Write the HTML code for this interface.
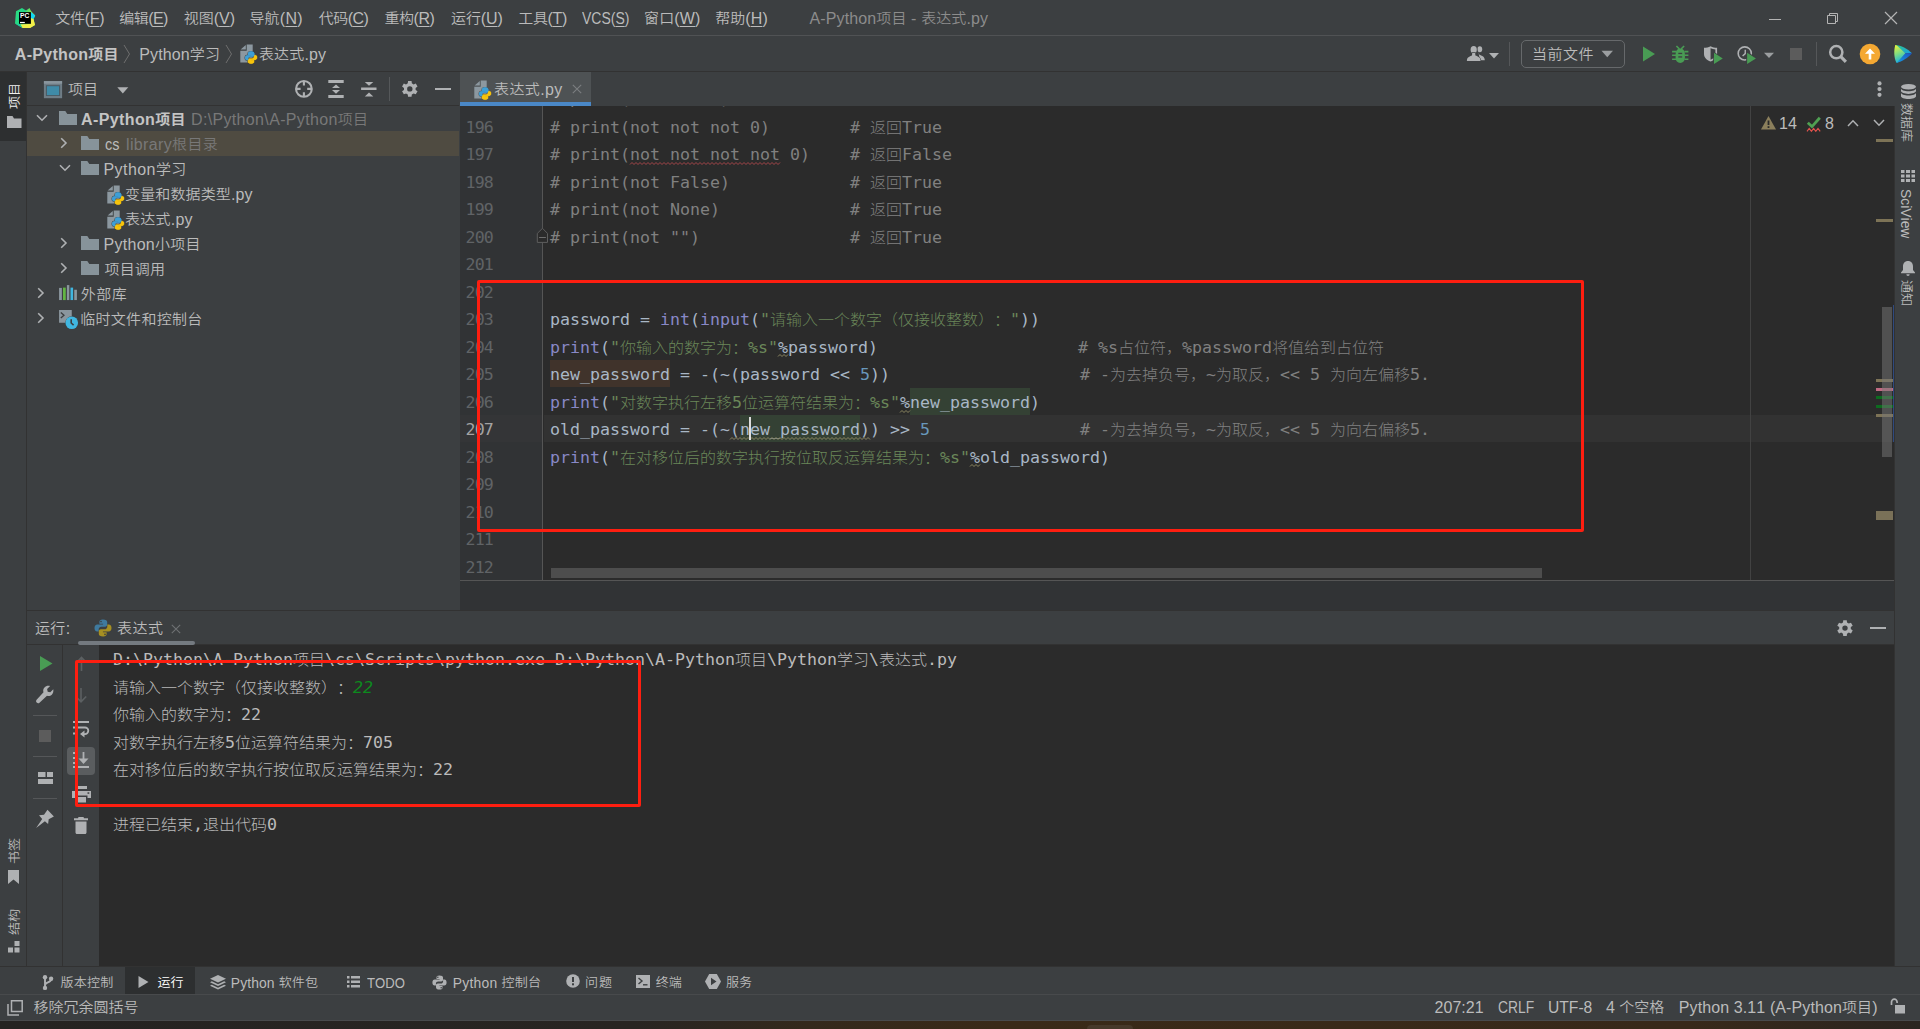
<!DOCTYPE html>
<html lang="zh-CN">
<head>
<meta charset="utf-8">
<title>A-Python项目 - 表达式.py</title>
<style>
*{box-sizing:border-box;margin:0;padding:0}
html,body{width:1920px;height:1029px;overflow:hidden;background:#3c3f41}
body{position:relative;font-family:"Liberation Sans","Noto Sans CJK SC",sans-serif;font-size:15px;color:#bbbbbb;-webkit-font-smoothing:antialiased;text-spacing-trim:space-all;font-kerning:none}
.abs{position:absolute}
.t{position:absolute;white-space:pre;line-height:20px;height:20px;font-size:16px;letter-spacing:var(--ls,0px);transform-origin:0 50%;transform:scaleX(var(--sx,1))}
.t.bd i{font-weight:700}
.t i,.vt i{font-weight:350;font-style:normal;display:inline-block;font-size:.9375em;line-height:0;transform:translateY(-.8px) scaleY(.93);letter-spacing:var(--ls,0px)}
.hl{position:absolute;height:1px;left:0;right:0}
svg{position:absolute;overflow:visible}
/* menu */
#menubar{left:0;top:0;width:1920px;height:36px;background:#3c3f41;border-bottom:1px solid #505254}
#menubar .t{top:8.600px;color:#bbbbbb}
#menubar u{text-decoration-thickness:1px;text-underline-offset:2px}
#navbar{left:0;top:36px;width:1920px;height:36px;background:#3c3f41;border-bottom:1px solid #323232}
#navbar .t{top:8.8px}
/* stripes */
#lstripe{left:0;top:72px;width:27px;height:894px;background:#3c3f41;border-right:1px solid #323232}
#rstripe{left:1894px;top:72px;width:26px;height:894px;background:#3c3f41;border-left:1px solid #323232}
.vt{position:absolute;white-space:pre;font-size:13.9px;line-height:16px;transform-origin:0 0}
/* project */
#proj{left:27px;top:72px;width:432px;height:538px;background:#3c3f41}
#projhead{left:0;top:0;width:432px;height:34px}
#tree .row{position:absolute;left:0;width:432px;height:25px}
#tree .t{top:3.5px}
.dim{color:#787878}
/* editor */
#edwrap{left:459px;top:72px;width:1435px;height:509px;background:#2b2b2b;border-left:1px solid #3c3f41}
#tabs{left:0;top:0;width:1435px;height:34px;background:#3c3f41}
#tab1{left:0;top:0;width:131px;height:34px;background:#4e5254;border-bottom:4px solid #4a88c7}
#gutter{left:0;top:34px;width:83px;height:475px;background:#313335;border-right:1px solid #555555}
.ln{position:absolute;left:5.6px;font-family:"DejaVu Sans Mono","Liberation Mono",monospace;font-size:16.61px;letter-spacing:-.9px;color:#606366;line-height:27.5px;height:27.5px;white-space:pre}
#code{left:84px;top:34px;width:1350px;height:475px;overflow:hidden}
.cl{position:absolute;left:6px;font-family:"DejaVu Sans Mono","Liberation Mono","Noto Sans CJK SC",monospace;font-size:16.61px;color:#a9b7c6;line-height:27.5px;height:27.5px;white-space:pre}
.cl i{font-weight:300;line-height:0;display:inline-block;transform:scaleY(.93);font-style:normal;font-size:16px;font-family:"Noto Sans CJK SC",sans-serif}
.c{color:#808080}.s{color:#6a8759}.b{color:#8888c6}.n{color:#6897bb}
/* run */
#run{left:27px;top:610px;width:1867px;height:356px;background:#3c3f41;border-top:1px solid #323232}
#console{left:72px;top:34px;width:1795px;height:321px;background:#2b2b2b;overflow:hidden}
.ol{position:absolute;left:14px;font-family:"DejaVu Sans Mono","Liberation Mono","Noto Sans CJK SC",monospace;font-size:16.61px;color:#bbbbbb;line-height:27.5px;height:27.5px;white-space:pre}
.ol i{font-weight:300;line-height:0;display:inline-block;transform:scaleY(.93);font-style:normal;font-size:16px;font-family:"Noto Sans CJK SC",sans-serif}
/* bottom */
#btools{left:0;top:966px;width:1920px;height:28px;background:#3c3f41;border-top:1px solid #323232}
#btools .t{top:6.100px;font-size:13.9px}
#status{left:0;top:994px;width:1920px;height:27px;background:#3c3f41;border-top:1px solid #484a4c;border-bottom:1px solid #484a4c}
#status .t{top:3.400px}
#desk{left:0;top:1021px;width:1920px;height:8px;background:linear-gradient(90deg,#252321 0%,#282522 33%,#34291c 42%,#3a2a18 52%,#38291a 88%,#2b2520 100%)}
.red{position:absolute;border:3px solid #fe1e10;border-radius:2px}
</style>
</head>
<body>
<div id="menubar" class="abs">
<svg style="left:14px;top:7px" width="22" height="22" viewBox="0 0 22 22"><defs><linearGradient id="lg1" x1="0" y1="0" x2="1" y2=".3"><stop offset="0" stop-color="#2fdc7e"/><stop offset=".45" stop-color="#21d789"/><stop offset=".8" stop-color="#8be84f"/></linearGradient></defs><path d="M2 4.200L8 1L12 3.500L15.500.9L17 4L21.200 8.500L19.500 12L21 18L16 21L8.500 21L1 16.500Z" fill="url(#lg1)"/><path d="M17 9L19.500 12L21 18L16 21L8.500 21L6.500 17.500L17 17Z" fill="#f3ee48"/><path d="M8.500 21L6 17L4 17.500L1 16.500L8.500 21Z" fill="#1fc9a0"/><path d="M16.800 5L21.200 8.500L19.500 12L16.800 11Z" fill="#10d5f4"/><rect x="5" y="5.100" width="11.900" height="11.700" fill="#000"/><text x="6" y="11.200" font-family="Liberation Sans,sans-serif" font-weight="bold" font-size="7.600" textLength="9.300" lengthAdjust="spacingAndGlyphs" fill="#fff">PC</text><rect x="6" y="14.900" width="4.800" height="1.200" fill="#fff"/></svg>
<span id="t1" class="t" style="left:55.20px;--ls:-0.262px"><i>文件</i>(<u>F</u>)</span>
<span id="t2" class="t" style="left:119.20px;--ls:-0.525px"><i>编辑</i>(<u>E</u>)</span>
<span id="t3" class="t" style="left:183.75px"><i>视图</i>(<u>V</u>)</span>
<span id="t4" class="t" style="left:249.40px;--ls:0.225px"><i>导航</i>(<u>N</u>)</span>
<span id="t5" class="t" style="left:318.80px;--ls:-0.525px"><i>代码</i>(<u>C</u>)</span>
<span id="t6" class="t" style="left:384.40px;--ls:-0.450px"><i>重构</i>(<u>R</u>)</span>
<span id="t7" class="t" style="left:451.00px;--ls:-0.100px"><i>运行</i>(<u>U</u>)</span>
<span id="t8" class="t" style="left:518.25px;--ls:-0.363px"><i>工具</i>(<u>T</u>)</span>
<span id="t9" class="t" style="left:581.50px;--sx:0.8741">VCS(<u>S</u>)</span>
<span id="t10" class="t" style="left:644.00px;--ls:0.150px"><i>窗口</i>(<u>W</u>)</span>
<span id="t11" class="t" style="left:715.20px;--ls:0.075px"><i>帮助</i>(<u>H</u>)</span>
<span id="t12" class="t" style="left:809.50px;color:#8c8c8c;--ls:0.121px">A-Python<i>项目</i> - <i>表达式</i>.py</span>
<svg style="left:1768px;top:12px" width="14" height="14" viewBox="0 0 14 14"><path d="M1 7.5H13" stroke="#b4b4b4" stroke-width="1" fill="none"/></svg>
<svg style="left:1826px;top:12px" width="14" height="14" viewBox="0 0 14 14"><path d="M1.5 3.5H9.5V11.5H1.5Z M3.5 3.5V1.5H11.5V9.5H9.5" stroke="#b4b4b4" stroke-width="1" fill="none"/></svg>
<svg style="left:1884px;top:11px" width="14" height="14" viewBox="0 0 14 14"><path d="M1 1L13 13M13 1L1 13" stroke="#b4b4b4" stroke-width="1.2" fill="none"/></svg>
</div>
<div id="navbar" class="abs">
<span id="t13" class="t bd" style="left:14.80px;font-weight:bold;color:#c4c4c4;--ls:0.300px">A-Python<i>项目</i></span>
<svg style="left:122px;top:8px" width="10" height="20" viewBox="0 0 10 20"><path d="M2 1L7.5 10L2 19" stroke="#6e6e6e" stroke-width="1" fill="none"/></svg>
<span id="t14" class="t" style="left:139.20px;--ls:0.143px">Python<i>学习</i></span>
<svg style="left:224px;top:8px" width="10" height="20" viewBox="0 0 10 20"><path d="M2 1L7.5 10L2 19" stroke="#6e6e6e" stroke-width="1" fill="none"/></svg>
<svg style="left:239.5px;top:7.5px" width="18" height="20" viewBox="0 0 18 20"><path d="M.3 6.800V18.500H12.700V.5H6.700V6.800Z" fill="#8c98a0"/><path d="M5.800.9V5.600H.6Z" fill="#8c98a0"/><g transform="translate(5.200,7.600) scale(.98,1)"><path d="M5.900 0C3.400 0 3 1.100 3 2V3.400H6.100V3.900H1.900C.6 3.900 0 4.900 0 6.100C0 7.500.7 8.400 1.900 8.400H3V6.800C3 5.700 3.900 4.900 5 4.900H7.700C8.600 4.900 9.200 4.200 9.200 3.400V2C9.200.7 8 0 5.900 0Z" fill="#3e9fd6" stroke="#3c3f41" stroke-width="1.400" paint-order="stroke"/><path d="M5.900 0C3.400 0 3 1.100 3 2V3.400H6.100V3.900H1.900C.6 3.900 0 4.900 0 6.100C0 7.500.7 8.400 1.900 8.400H3V6.800C3 5.700 3.900 4.900 5 4.900H7.700C8.600 4.900 9.200 4.200 9.200 3.400V2C9.200.7 8 0 5.900 0Z" transform="rotate(180 6 6)" fill="#f7c40c" stroke="#3c3f41" stroke-width="1.400" paint-order="stroke"/><path d="M5.900 0C3.400 0 3 1.100 3 2V3.400H6.100V3.900H1.900C.6 3.900 0 4.900 0 6.100C0 7.500.7 8.400 1.900 8.400H3V6.800C3 5.700 3.900 4.900 5 4.900H7.700C8.600 4.900 9.200 4.200 9.200 3.400V2C9.200.7 8 0 5.900 0Z" transform="rotate(180 6 6)" fill="#f7c40c" stroke="#f7c40c" stroke-width=".5"/><path d="M5.900 0C3.400 0 3 1.100 3 2V3.400H6.100V3.900H1.900C.6 3.900 0 4.900 0 6.100C0 7.500.7 8.400 1.900 8.400H3V6.800C3 5.700 3.900 4.900 5 4.900H7.700C8.600 4.900 9.200 4.200 9.200 3.400V2C9.200.7 8 0 5.900 0Z" fill="#3e9fd6" stroke="#3e9fd6" stroke-width=".5"/></g></svg>
<span id="t15" class="t" style="left:259.00px;--ls:0.120px"><i>表达式</i>.py</span>
<svg style="left:1466px;top:9px" width="34" height="18" viewBox="0 0 34 18"><g fill="#afb1b3"><ellipse cx="13.800" cy="4.300" rx="2.400" ry="3"/><path d="M12.300 6.500L12.600 9.300C14 10.300 18.800 10.800 18.800 15.200H14Z"/></g><g fill="#afb1b3" stroke="#3c3f41" stroke-width="1.300" paint-order="stroke"><ellipse cx="7.700" cy="4.800" rx="3.100" ry="3.700"/><path d="M.9 16C.9 12.300 3.500 11.500 6 10.600L6.200 8H9.200L9.400 10.600C12 11.500 14.600 12.300 14.600 16Z"/></g><path d="M23 8h10l-5 5.500z" fill="#afb1b3"/></svg>
<div class="abs" style="left:1509px;top:6px;width:1px;height:24px;background:#555759"></div>
<div class="abs" style="left:1521px;top:4px;width:104px;height:28px;border:1px solid #66696b;border-radius:5px"></div>
<span id="t16" class="t" style="left:1532.00px;top:8.8px;--ls:0.500px"><i>当前文件</i></span>
<svg style="left:1601px;top:14px" width="13" height="8" viewBox="0 0 13 8"><path d="M.5.800h11.500L6.250 7.200z" fill="#9b9ea0"/></svg>
<svg style="left:1641px;top:9px" width="16" height="18" viewBox="0 0 16 18"><path d="M2 1.500L14 9L2 16.500z" fill="#499c54"/></svg>
<svg style="left:1671px;top:8px" width="19" height="20" viewBox="0 0 19 20"><g fill="#499c54"><path d="M4.800 2.500L6 1.400L9 4.400L7.800 5.500ZM13.700 2.500L12.500 1.400L9.500 4.400L10.700 5.500Z"/><path d="M4.600 10C4.600 6.500 6.500 4.600 9.250 4.600S13.900 6.500 13.900 10V14C13.900 17 12 18.900 9.250 18.900S4.600 17 4.600 14Z"/><path d="M1.100 6.800H5V8.400H1.100ZM17.400 6.800H13.500V8.400H17.400ZM1.100 10.500H5V12.100H1.100ZM17.400 10.500H13.500V12.100H17.400ZM1.100 14.500H5V16.100H1.100ZM17.400 14.500H13.500V16.100H17.400Z"/></g><rect x="7.300" y="8.800" width="3.900" height="1.300" fill="#3c3f41"/><rect x="7.300" y="12.300" width="3.900" height="1.300" fill="#3c3f41"/></svg>
<svg style="left:1703px;top:9px" width="22" height="20" viewBox="0 0 22 20"><path d="M7.560 1.200C9.500 2.400 12 2.800 14.100 2.800V9C14.100 12.500 11.500 15.200 7.560 16.600C3.600 15.200 1 12.500 1 9V2.800C3.100 2.800 5.600 2.400 7.560 1.200Z" fill="#afb1b3"/><path d="M7.560 3.300C9 4 10.800 4.400 12.400 4.500V9C12.400 11.400 10.500 13.500 7.560 14.700Z" fill="#3c3f41"/><path d="M11 7.800L19.750 13.400L11 19.060Z" fill="#499c54" stroke="#3c3f41" stroke-width="1.600" paint-order="stroke"/></svg>
<svg style="left:1736px;top:9px" width="40" height="20" viewBox="0 0 40 20"><circle cx="8.750" cy="8.440" r="6.550" stroke="#afb1b3" stroke-width="1.600" fill="none"/><path d="M9.250 4.800V8.600L6.600 11" stroke="#afb1b3" stroke-width="1.400" fill="none"/><path d="M11.100 7.800L19.900 13.400L11.100 19.060Z" fill="#499c54" stroke="#3c3f41" stroke-width="1.800" paint-order="stroke"/><path d="M28 7.800H38L33 13.100Z" fill="#9b9ea0"/></svg>
<div class="abs" style="left:1789.800px;top:11.800px;width:12.300px;height:12.200px;background:#5c5c5c"></div>
<div class="abs" style="left:1816px;top:6px;width:1px;height:24px;background:#555759"></div>
<svg style="left:1828px;top:8px" width="20" height="20" viewBox="0 0 20 20"><circle cx="8.300" cy="8.200" r="6.100" stroke="#afb1b3" stroke-width="2.500" fill="none"/><path d="M12.800 12.700L17.900 17.800" stroke="#afb1b3" stroke-width="3.200"/></svg>
<svg style="left:1859px;top:7px" width="22" height="22" viewBox="0 0 22 22"><circle cx="11" cy="11" r="10.300" fill="#f4a832"/><path d="M11 5.500L16 10.800H12.300V16.500H9.700V10.800H6z" fill="#fff"/></svg>
<svg style="left:1893px;top:8px" width="20" height="20" viewBox="0 0 20 20"><defs><linearGradient id="lg2" x1=".2" y1="0" x2=".5" y2="1"><stop offset="0" stop-color="#e9f43a"/><stop offset=".5" stop-color="#7bdb86"/><stop offset="1" stop-color="#10aeea"/></linearGradient><linearGradient id="lg3" x1="0" y1="0" x2="1" y2="1"><stop offset="0" stop-color="#2fc98c"/><stop offset="1" stop-color="#1a9ce2"/></linearGradient><linearGradient id="lg4" x1="1" y1="0" x2="0" y2="1"><stop offset="0" stop-color="#1b50c6"/><stop offset="1" stop-color="#169fe0"/></linearGradient></defs><path d="M2.300 .9C8 1.200 14.500 4.500 19 9.300L12 9.200Z" fill="url(#lg3)"/><path d="M19 9.300C15 14 9 17.500 3.600 18.900L12 9.200Z" fill="url(#lg4)"/><path d="M2.300 .9C3 .8 4 1.500 4.500 2L12.300 9.200L4.500 18.300C4 18.800 3.800 19 3.600 18.900C.8 13.500.8 6 2.300 .9Z" fill="url(#lg2)"/></svg>
</div>
<div id="lstripe" class="abs">
<div class="abs" style="left:0;top:0;width:26px;height:69px;background:#2d2f30"></div>
<span class="vt" style="left:7px;top:36.700px;transform:rotate(-90deg);color:#f0f0f0"><i>项目</i></span>
<svg style="left:7px;top:44px" width="15" height="12" viewBox="0 0 15 12"><path d="M0 0H5.500L7 2.500H14.500V12H0z" fill="#afb1b3"/></svg>
<span class="vt" style="left:7px;top:792px;transform:rotate(-90deg)"><i>书签</i></span>
<svg style="left:8px;top:798px" width="11" height="14" viewBox="0 0 11 14"><path d="M0 0H11V14L5.500 9.500L0 14z" fill="#afb1b3"/></svg>
<span class="vt" style="left:7px;top:862.500px;transform:rotate(-90deg)"><i>结构</i></span>
<svg style="left:8px;top:869px" width="12" height="12" viewBox="0 0 12 12"><rect x="6.500" y="0" width="5" height="5" fill="#afb1b3"/><rect x="0" y="6.500" width="5" height="5" fill="#afb1b3"/><rect x="6.500" y="6.500" width="5" height="5" fill="#afb1b3"/></svg>
</div>
<div id="rstripe" class="abs">
<svg style="left:6px;top:12px" width="15" height="15" viewBox="0 0 15 15"><ellipse cx="7.500" cy="2.800" rx="7.500" ry="2.800" fill="#afb1b3"/><path d="M0 4.500c0 1.500 3.400 2.800 7.500 2.800s7.500-1.300 7.500-2.800v2.600c0 1.500-3.400 2.800-7.500 2.800S0 8.600 0 7.100z" fill="#afb1b3"/><path d="M0 8.800c0 1.500 3.400 2.800 7.500 2.800s7.500-1.300 7.500-2.800v3.400c0 1.500-3.400 2.800-7.500 2.800S0 13.700 0 12.200z" fill="#afb1b3"/></svg>
<span class="vt" style="left:19px;top:31px;transform:rotate(90deg)"><i>数据库</i></span>
<svg style="left:6px;top:98px" width="14" height="12" viewBox="0 0 14 12"><path d="M0 0H3.500V3H0zM5 0H9V3H5zM10.500 0H14V3H10.500zM0 4.500H3.500V7.500H0zM5 4.500H9V7.500H5zM10.500 4.500H14V7.500H10.500zM0 9H3.500V12H0zM5 9H9V12H5zM10.500 9H14V12H10.500z" fill="#afb1b3"/></svg>
<span class="vt" style="left:19px;top:117px;transform:rotate(90deg)">SciView</span>
<svg style="left:6px;top:189px" width="14" height="15" viewBox="0 0 14 15"><path d="M7 0C4 0 2 2.200 2 5.500V9L0 11.500V12.200H14V11.500L12 9V5.500C12 2.200 10 0 7 0z" fill="#afb1b3"/><path d="M5.300 13.300H8.700A1.700 1.700 0 0 1 5.300 13.300z" fill="#afb1b3"/></svg>
<span class="vt" style="left:19px;top:208px;transform:rotate(90deg)"><i>通知</i></span>
</div>
<div id="proj" class="abs"><div id="projhead" class="abs" style="border-bottom:1px solid #323232">
<svg style="left:17px;top:9px" width="19" height="18" viewBox="0 0 19 18"><rect x="-.1" y=".1" width="18.200" height="17.100" fill="#6f7d86"/><rect x="-.1" y=".1" width="18.200" height="2.600" fill="#8a969e"/><rect x="1.900" y="4.200" width="14.200" height="10.800" fill="#4b5a63"/><rect x="2.900" y="5.200" width="12.200" height="8.900" fill="#3f8ba8"/></svg>
<span id="t17" class="t" style="left:41.00px;top:7.5px"><i>项目</i></span>
<svg style="left:90px;top:15px" width="12" height="7" viewBox="0 0 12 7"><path d="M.3.300h11L5.800 6.500z" fill="#afb1b3"/></svg>
<svg style="left:267px;top:8px" width="20" height="19" viewBox="0 0 20 19"><circle cx="9.900" cy="8.900" r="7.850" stroke="#afb1b3" stroke-width="2.100" fill="none"/><path d="M9.900 1V5.600M9.900 12.200V16.800M2 8.900H6.600M13.200 8.900H17.800" stroke="#afb1b3" stroke-width="2.100"/></svg>
<svg style="left:301px;top:8px" width="16" height="18" viewBox="0 0 16 18"><path d="M.3.100H15.700V2.900H.3ZM.3 15.100H15.700V17.900H.3ZM8 4.500L12 7.900H4ZM8 13.700L12 10.100H4Z" fill="#afb1b3"/></svg>
<svg style="left:334px;top:8px" width="16" height="18" viewBox="0 0 16 18"><path d="M.1 7.600H15.500V10.100H.1ZM8 5.700L12.300 2H3.800ZM8 12.600L12.300 16.500H3.800Z" fill="#afb1b3"/></svg>
<div class="abs" style="left:362px;top:5px;width:1px;height:24px;background:#55585a"></div>
<svg style="left:374px;top:8px" width="18" height="18" viewBox="0 0 18 18"><path d="M10.82 3.36L10.55 0.99L7.05 0.99L6.78 3.36L5.01 4.38L2.83 3.43L1.07 6.46L2.99 7.88L2.99 9.92L1.07 11.34L2.83 14.37L5.01 13.42L6.78 14.44L7.05 16.81L10.55 16.81L10.82 14.44L12.59 13.42L14.77 14.37L16.53 11.34L14.61 9.92L14.61 7.88L16.53 6.46L14.77 3.43L12.59 4.38Z" fill="#afb1b3"/><circle cx="8.8" cy="8.9" r="2.7" fill="#3c3f41"/></svg>
<div class="abs" style="left:408px;top:15.700px;width:15.500px;height:2.400px;background:#afb1b3"></div>
</div><div id="tree" class="abs" style="left:0;top:34px"><div class="row" style="top:0px"><svg style="left:9px;top:8.2px" width="12" height="8" viewBox="0 0 12 8"><path d="M1 1.200L6 6.200L11 1.200" stroke="#afb1b3" stroke-width="1.600" fill="none"/></svg><svg style="left:32px;top:5px" width="18" height="14" viewBox="0 0 18 14"><path d="M0 0H6.300L8.300 3H18V14H0z" fill="#87939a"/></svg><span id="t18" class="t bd" style="left:54.00px;font-weight:bold;color:#c4c4c4;--ls:0.389px">A-Python<i>项目</i></span><span id="t19" class="t dim" style="left:164.00px;--ls:0.343px">D:\Python\A-Python<i>项目</i></span></div><div class="row" style="top:25px;background:#4f4b41"><svg style="left:33.4px;top:6px" width="8" height="12" viewBox="0 0 8 12"><path d="M1.200 1.200L6 6L1.200 10.800" stroke="#afb1b3" stroke-width="1.600" fill="none"/></svg><svg style="left:54px;top:5px" width="18" height="14" viewBox="0 0 18 14"><path d="M0 0H6.300L8.300 3H18V14H0z" fill="#87939a"/></svg><span id="t20" class="t" style="left:77.50px;--sx:0.9025">cs</span><span id="t21" class="t dim" style="left:99.00px;--ls:0.361px">library<i>根目录</i></span></div><div class="row" style="top:50px"><svg style="left:32px;top:8.2px" width="12" height="8" viewBox="0 0 12 8"><path d="M1 1.200L6 6.200L11 1.200" stroke="#afb1b3" stroke-width="1.600" fill="none"/></svg><svg style="left:54px;top:5px" width="18" height="14" viewBox="0 0 18 14"><path d="M0 0H6.300L8.300 3H18V14H0z" fill="#87939a"/></svg><span id="t22" class="t" style="left:76.50px;--ls:0.429px">Python<i>学习</i></span></div><div class="row" style="top:75px"><svg style="left:79.5px;top:3.5px" width="18" height="20" viewBox="0 0 18 20"><path d="M.3 6.800V18.500H12.700V.5H6.700V6.800Z" fill="#8c98a0"/><path d="M5.800.9V5.600H.6Z" fill="#8c98a0"/><g transform="translate(5.200,7.600) scale(.98,1)"><path d="M5.900 0C3.400 0 3 1.100 3 2V3.400H6.100V3.900H1.900C.6 3.900 0 4.900 0 6.100C0 7.500.7 8.400 1.900 8.400H3V6.800C3 5.700 3.900 4.900 5 4.900H7.700C8.600 4.900 9.200 4.200 9.200 3.400V2C9.200.7 8 0 5.900 0Z" fill="#3e9fd6" stroke="#3c3f41" stroke-width="1.400" paint-order="stroke"/><path d="M5.900 0C3.400 0 3 1.100 3 2V3.400H6.100V3.900H1.900C.6 3.900 0 4.900 0 6.100C0 7.500.7 8.400 1.900 8.400H3V6.800C3 5.700 3.900 4.900 5 4.900H7.700C8.600 4.900 9.200 4.200 9.200 3.400V2C9.200.7 8 0 5.900 0Z" transform="rotate(180 6 6)" fill="#f7c40c" stroke="#3c3f41" stroke-width="1.400" paint-order="stroke"/><path d="M5.900 0C3.400 0 3 1.100 3 2V3.400H6.100V3.900H1.900C.6 3.900 0 4.900 0 6.100C0 7.500.7 8.400 1.900 8.400H3V6.800C3 5.700 3.900 4.900 5 4.900H7.700C8.600 4.900 9.200 4.200 9.200 3.400V2C9.200.7 8 0 5.900 0Z" transform="rotate(180 6 6)" fill="#f7c40c" stroke="#f7c40c" stroke-width=".5"/><path d="M5.900 0C3.400 0 3 1.100 3 2V3.400H6.100V3.900H1.900C.6 3.900 0 4.900 0 6.100C0 7.500.7 8.400 1.900 8.400H3V6.800C3 5.700 3.900 4.900 5 4.900H7.700C8.600 4.900 9.200 4.200 9.200 3.400V2C9.200.7 8 0 5.900 0Z" fill="#3e9fd6" stroke="#3e9fd6" stroke-width=".5"/></g></svg><span id="t23" class="t" style="left:98.00px;--ls:0.139px"><i>变量和数据类型</i>.py</span></div><div class="row" style="top:100px"><svg style="left:79.5px;top:3.5px" width="18" height="20" viewBox="0 0 18 20"><path d="M.3 6.800V18.500H12.700V.5H6.700V6.800Z" fill="#8c98a0"/><path d="M5.800.9V5.600H.6Z" fill="#8c98a0"/><g transform="translate(5.200,7.600) scale(.98,1)"><path d="M5.900 0C3.400 0 3 1.100 3 2V3.400H6.100V3.900H1.900C.6 3.900 0 4.900 0 6.100C0 7.500.7 8.400 1.900 8.400H3V6.800C3 5.700 3.900 4.900 5 4.900H7.700C8.600 4.900 9.200 4.200 9.200 3.400V2C9.200.7 8 0 5.900 0Z" fill="#3e9fd6" stroke="#3c3f41" stroke-width="1.400" paint-order="stroke"/><path d="M5.900 0C3.400 0 3 1.100 3 2V3.400H6.100V3.900H1.900C.6 3.900 0 4.900 0 6.100C0 7.500.7 8.400 1.900 8.400H3V6.800C3 5.700 3.900 4.900 5 4.900H7.700C8.600 4.900 9.200 4.200 9.200 3.400V2C9.200.7 8 0 5.900 0Z" transform="rotate(180 6 6)" fill="#f7c40c" stroke="#3c3f41" stroke-width="1.400" paint-order="stroke"/><path d="M5.900 0C3.400 0 3 1.100 3 2V3.400H6.100V3.900H1.900C.6 3.900 0 4.900 0 6.100C0 7.500.7 8.400 1.900 8.400H3V6.800C3 5.700 3.900 4.900 5 4.900H7.700C8.600 4.900 9.200 4.200 9.200 3.400V2C9.200.7 8 0 5.900 0Z" transform="rotate(180 6 6)" fill="#f7c40c" stroke="#f7c40c" stroke-width=".5"/><path d="M5.900 0C3.400 0 3 1.100 3 2V3.400H6.100V3.900H1.900C.6 3.900 0 4.900 0 6.100C0 7.500.7 8.400 1.900 8.400H3V6.800C3 5.700 3.900 4.900 5 4.900H7.700C8.600 4.900 9.200 4.200 9.200 3.400V2C9.200.7 8 0 5.900 0Z" fill="#3e9fd6" stroke="#3e9fd6" stroke-width=".5"/></g></svg><span id="t24" class="t" style="left:98.00px;--ls:0.250px"><i>表达式</i>.py</span></div><div class="row" style="top:125px"><svg style="left:33.4px;top:6px" width="8" height="12" viewBox="0 0 8 12"><path d="M1.200 1.200L6 6L1.200 10.800" stroke="#afb1b3" stroke-width="1.600" fill="none"/></svg><svg style="left:54px;top:5px" width="18" height="14" viewBox="0 0 18 14"><path d="M0 0H6.300L8.300 3H18V14H0z" fill="#87939a"/></svg><span id="t25" class="t" style="left:76.50px;--ls:0.281px">Python<i>小项目</i></span></div><div class="row" style="top:150px"><svg style="left:33.4px;top:6px" width="8" height="12" viewBox="0 0 8 12"><path d="M1.200 1.200L6 6L1.200 10.800" stroke="#afb1b3" stroke-width="1.600" fill="none"/></svg><svg style="left:54px;top:5px" width="18" height="14" viewBox="0 0 18 14"><path d="M0 0H6.300L8.300 3H18V14H0z" fill="#87939a"/></svg><span id="t26" class="t" style="left:77.50px;--ls:0.167px"><i>项目调用</i></span></div><div class="row" style="top:175px"><svg style="left:10.4px;top:6px" width="8" height="12" viewBox="0 0 8 12"><path d="M1.200 1.200L6 6L1.200 10.800" stroke="#afb1b3" stroke-width="1.600" fill="none"/></svg><svg style="left:32px;top:4px" width="18" height="16" viewBox="0 0 18 16"><rect x=".06" y="2.900" width="2.800" height="12.160" fill="#8a969e"/><rect x="4" y="2.600" width="2.750" height="12.460" fill="#62b543"/><rect x="7.900" y=".1" width="2.400" height="14.960" fill="#8a969e"/><rect x="11.500" y="2.600" width="2.600" height="12.460" fill="#40b6e0"/><rect x="15.250" y="4.750" width="2.650" height="10.310" fill="#8a969e"/></svg><span id="t27" class="t" style="left:53.75px;--ls:0.500px"><i>外部库</i></span></div><div class="row" style="top:200px"><svg style="left:10.4px;top:6px" width="8" height="12" viewBox="0 0 8 12"><path d="M1.200 1.200L6 6L1.200 10.800" stroke="#afb1b3" stroke-width="1.600" fill="none"/></svg><svg style="left:32px;top:3.800px" width="20" height="20" viewBox="0 0 20 20"><path d="M.06 .1H12.750V6.200A6.900 6.900 0 0 0 6.200 12.800H.06z" fill="#8a969e"/><path d="M1.800 2.400L5 5.200L1.800 8" stroke="#3c3f41" stroke-width="1.300" fill="none"/><circle cx="12.750" cy="12.800" r="6.300" fill="#40b6e0"/><path d="M12.200 9.300V13L14.600 15.200" stroke="#3c3f41" stroke-width="1.600" fill="none"/></svg><span id="t28" class="t" style="left:53.25px;--ls:0.286px"><i>临时文件和控制台</i></span></div></div></div>
<div id="edwrap" class="abs"><div id="tabs" class="abs"><div id="tab1" class="abs"><svg style="left:13.5px;top:7.5px" width="18" height="20" viewBox="0 0 18 20"><path d="M.3 6.800V18.500H12.700V.5H6.700V6.800Z" fill="#8c98a0"/><path d="M5.800.9V5.600H.6Z" fill="#8c98a0"/><g transform="translate(5.200,7.600) scale(.98,1)"><path d="M5.900 0C3.400 0 3 1.100 3 2V3.400H6.100V3.900H1.900C.6 3.900 0 4.900 0 6.100C0 7.500.7 8.400 1.900 8.400H3V6.800C3 5.700 3.900 4.900 5 4.900H7.700C8.600 4.900 9.200 4.200 9.200 3.400V2C9.200.7 8 0 5.900 0Z" fill="#3e9fd6" stroke="#4e5254" stroke-width="1.400" paint-order="stroke"/><path d="M5.900 0C3.400 0 3 1.100 3 2V3.400H6.100V3.900H1.900C.6 3.900 0 4.900 0 6.100C0 7.500.7 8.400 1.900 8.400H3V6.800C3 5.700 3.900 4.900 5 4.900H7.700C8.600 4.900 9.200 4.200 9.200 3.400V2C9.200.7 8 0 5.900 0Z" transform="rotate(180 6 6)" fill="#f7c40c" stroke="#4e5254" stroke-width="1.400" paint-order="stroke"/><path d="M5.900 0C3.400 0 3 1.100 3 2V3.400H6.100V3.900H1.900C.6 3.900 0 4.900 0 6.100C0 7.500.7 8.400 1.900 8.400H3V6.800C3 5.700 3.900 4.900 5 4.900H7.700C8.600 4.900 9.200 4.200 9.200 3.400V2C9.200.7 8 0 5.900 0Z" transform="rotate(180 6 6)" fill="#f7c40c" stroke="#f7c40c" stroke-width=".5"/><path d="M5.900 0C3.400 0 3 1.100 3 2V3.400H6.100V3.900H1.900C.6 3.900 0 4.900 0 6.100C0 7.500.7 8.400 1.900 8.400H3V6.800C3 5.700 3.900 4.900 5 4.900H7.700C8.600 4.900 9.200 4.200 9.200 3.400V2C9.200.7 8 0 5.900 0Z" fill="#3e9fd6" stroke="#3e9fd6" stroke-width=".5"/></g></svg><span id="t29" class="t" style="left:34.00px;top:7.8px;--ls:0.380px"><i>表达式</i>.py</span><svg style="left:112px;top:12px" width="10" height="10" viewBox="0 0 10 10"><path d="M.8.800L9.200 9.200M9.200.8L.8 9.200" stroke="#7b7e80" stroke-width="1.100"/></svg></div>
<svg style="left:1416.800px;top:9px" width="5" height="17" viewBox="0 0 5 17"><circle cx="2.500" cy="2.400" r="2.100" fill="#afb1b3"/><circle cx="2.500" cy="8.100" r="2.100" fill="#afb1b3"/><circle cx="2.500" cy="13.800" r="2.100" fill="#afb1b3"/></svg></div><div id="gutter" class="abs"><div class="abs" style="left:0;top:309px;width:82px;height:27px;background:#343537"></div><span class="ln" style="top:8px;color:#606366">196</span><span class="ln" style="top:35px;color:#606366">197</span><span class="ln" style="top:63px;color:#606366">198</span><span class="ln" style="top:90px;color:#606366">199</span><span class="ln" style="top:118px;color:#606366">200</span><span class="ln" style="top:145px;color:#606366">201</span><span class="ln" style="top:173px;color:#606366">202</span><span class="ln" style="top:200px;color:#606366">203</span><span class="ln" style="top:228px;color:#606366">204</span><span class="ln" style="top:255px;color:#606366">205</span><span class="ln" style="top:283px;color:#606366">206</span><span class="ln" style="top:310px;color:#a4a3a3">207</span><span class="ln" style="top:338px;color:#606366">208</span><span class="ln" style="top:365px;color:#606366">209</span><span class="ln" style="top:393px;color:#606366">210</span><span class="ln" style="top:420px;color:#606366">211</span><span class="ln" style="top:448px;color:#606366">212</span></div><div id="code" class="abs"><div class="abs" style="left:0;top:309px;width:1350px;height:27px;background:#323232"></div><div class="abs" style="left:6px;top:254.0px;width:120px;height:27px;background:#40332b"></div><div class="abs" style="left:366px;top:282.0px;width:120px;height:27px;background:#344134"></div><div class="abs" style="left:196px;top:309.0px;width:120px;height:27px;background:#344134"></div><div class="cl" style="top:-21.500px"><span class="c"># print(not not 0)            # <i>返回</i>False</span></div><div class="cl" style="top:8px"><span class="c"># print(not not not 0)        # <i>返回</i>True</span></div><div class="cl" style="top:35px"><span class="c"># print(<span class="wv">not not not not</span> 0)    # <i>返回</i>False</span></div><div class="cl" style="top:63px"><span class="c"># print(not False)            # <i>返回</i>True</span></div><div class="cl" style="top:90px"><span class="c"># print(not None)             # <i>返回</i>True</span></div><div class="cl" style="top:118px"><span class="c"># print(not "")               # <i>返回</i>True</span></div><div class="cl" style="top:200px">password = <span class="b">int</span>(<span class="b">input</span>(<span class="s">"<i>请输入一个数字（仅接收整数）：</i>"</span>))</div><div class="cl" style="top:228px"><span class="b">print</span>(<span class="s">"<i>你输入的数字为：</i>%s"</span><span class="wk">%</span>password)                    <span class="c"># %s<i>占位符，</i>%password<i>将值给到占位符</i></span></div><div class="cl" style="top:255px"><span class="wr">new_password</span> = -(~(password &lt;&lt; <span class="n">5</span>))                   <span class="c"># -<i>为去掉负号，</i>~<i>为取反，</i>&lt;&lt; 5 <i>为向左偏移</i>5.</span></div><div class="cl" style="top:283px"><span class="b">print</span>(<span class="s">"<i>对数字执行左移</i>5<i>位运算符结果为：</i>%s"</span><span class="wk">%</span><span class="rd">new_password</span>)</div><div class="cl" style="top:310px">old_password = -(~<span class="wk2">(<span class="rd">new_password</span>)</span>) &gt;&gt; <span class="n">5</span>               <span class="c"># -<i>为去掉负号，</i>~<i>为取反，</i>&lt;&lt; 5 <i>为向右偏移</i>5.</span></div><div class="cl" style="top:338px"><span class="b">print</span>(<span class="s">"<i>在对移位后的数字执行按位取反运算结果为：</i>%s"</span><span class="wk">%</span>old_password)</div><svg style="left:86px;top:56px" width="150" height="3" viewBox="0 0 150 3"><path d="M0 2.500L2 0.5L4 2.5L6 0.5L8 2.5L10 0.5L12 2.5L14 0.5L16 2.5L18 0.5L20 2.5L22 0.5L24 2.5L26 0.5L28 2.5L30 0.5L32 2.5L34 0.5L36 2.5L38 0.5L40 2.5L42 0.5L44 2.5L46 0.5L48 2.5L50 0.5L52 2.5L54 0.5L56 2.5L58 0.5L60 2.5L62 0.5L64 2.5L66 0.5L68 2.5L70 0.5L72 2.5L74 0.5L76 2.5L78 0.5L80 2.5L82 0.5L84 2.5L86 0.5L88 2.5L90 0.5L92 2.5L94 0.5L96 2.5L98 0.5L100 2.5L102 0.5L104 2.5L106 0.5L108 2.5L110 0.5L112 2.5L114 0.5L116 2.5L118 0.5L120 2.5L122 0.5L124 2.5L126 0.5L128 2.5L130 0.5L132 2.5L134 0.5L136 2.5L138 0.5L140 2.5L142 0.5L144 2.5L146 0.5L148 2.5L150 0.5" stroke="#a5464a" stroke-width="1" fill="none"/></svg><svg style="left:234px;top:248px" width="10" height="3" viewBox="0 0 10 3"><path d="M0 2.500L2 0.5L4 2.5L6 0.5L8 2.5L10 0.5" stroke="#8c8762" stroke-width="1" fill="none"/></svg><svg style="left:356px;top:304px" width="10" height="3" viewBox="0 0 10 3"><path d="M0 2.500L2 0.5L4 2.5L6 0.5L8 2.5L10 0.5" stroke="#8c8762" stroke-width="1" fill="none"/></svg><svg style="left:186px;top:331px" width="140" height="3" viewBox="0 0 140 3"><path d="M0 2.500L2 0.5L4 2.5L6 0.5L8 2.5L10 0.5L12 2.5L14 0.5L16 2.5L18 0.5L20 2.5L22 0.5L24 2.5L26 0.5L28 2.5L30 0.5L32 2.5L34 0.5L36 2.5L38 0.5L40 2.5L42 0.5L44 2.5L46 0.5L48 2.5L50 0.5L52 2.5L54 0.5L56 2.5L58 0.5L60 2.5L62 0.5L64 2.5L66 0.5L68 2.5L70 0.5L72 2.5L74 0.5L76 2.5L78 0.5L80 2.5L82 0.5L84 2.5L86 0.5L88 2.5L90 0.5L92 2.5L94 0.5L96 2.5L98 0.5L100 2.5L102 0.5L104 2.5L106 0.5L108 2.5L110 0.5L112 2.5L114 0.5L116 2.5L118 0.5L120 2.5L122 0.5L124 2.5L126 0.5L128 2.5L130 0.5L132 2.5L134 0.5L136 2.5L138 0.5L140 2.5" stroke="#8c8762" stroke-width="1" fill="none"/></svg><svg style="left:426px;top:358px" width="10" height="3" viewBox="0 0 10 3"><path d="M0 2.500L2 0.5L4 2.5L6 0.5L8 2.5L10 0.5" stroke="#8c8762" stroke-width="1" fill="none"/></svg><div class="abs" style="left:205px;top:311px;width:2px;height:23px;background:#dcdcdc"></div></div><div class="abs" style="left:1290px;top:34px;width:1px;height:474px;background:#424242"></div><div class="abs" style="left:1295px;top:37px;width:135px;height:27px;background:#2b2b2b"></div><svg style="left:1301px;top:44px" width="15" height="14" viewBox="0 0 15 14"><path d="M7.500 0L15 13.500H0z" fill="#8b7f5c"/><rect x="6.600" y="4.500" width="1.800" height="4.500" fill="#2b2b2b"/><rect x="6.600" y="10.200" width="1.800" height="1.800" fill="#2b2b2b"/></svg><span id="t30" class="t" style="left:1319px;top:41.8px;color:#bbbbbb">14</span><svg style="left:1346px;top:44px" width="16" height="16" viewBox="0 0 16 16"><path d="M1.800 6.800L6 10.600L13.800 1.800" stroke="#4fa052" stroke-width="2.800" fill="none"/><path d="M1 15.300L3.200 12.500L5.400 15.300L7.600 12.500L9.800 15.300L12 12.500L14.200 15.300" stroke="#e0524c" stroke-width="1.200" fill="none"/></svg><span id="t31" class="t" style="left:1365px;top:41.8px;color:#bbbbbb">8</span><svg style="left:1387px;top:47px" width="12" height="8" viewBox="0 0 12 8"><path d="M1 7L6 1.800L11 7" stroke="#afb1b3" stroke-width="1.500" fill="none"/></svg><svg style="left:1413px;top:47px" width="12" height="8" viewBox="0 0 12 8"><path d="M1 1L6 6.200L11 1" stroke="#afb1b3" stroke-width="1.500" fill="none"/></svg><div class="abs" style="left:1416px;top:67px;width:17px;height:3px;background:#7d7356"></div><div class="abs" style="left:1416px;top:147px;width:17px;height:3px;background:#7d7356"></div><div class="abs" style="left:1416px;top:307px;width:17px;height:3px;background:#7d7356"></div><div class="abs" style="left:1416px;top:316px;width:17px;height:3px;background:#c06a83"></div><div class="abs" style="left:1416px;top:324px;width:17px;height:3px;background:#0d6b1f"></div><div class="abs" style="left:1416px;top:333px;width:17px;height:3px;background:#0d6b1f"></div><div class="abs" style="left:1416px;top:342px;width:17px;height:3px;background:#7d7356"></div><div class="abs" style="left:1416px;top:439px;width:17px;height:9px;background:#7a7158"></div><div class="abs" style="left:1422px;top:235px;width:10px;height:150px;background:rgba(120,120,120,.5)"></div><div class="abs" style="left:1433px;top:233px;width:1px;height:137px;background:#2f4a80"></div><div class="abs" style="left:91px;top:496px;width:991px;height:10px;background:#4d4d4d"></div><div class="abs" style="left:0;top:508px;width:1434px;height:1px;background:#555555"></div><svg style="left:76px;top:155px" width="13" height="17" viewBox="0 0 13 17"><path d="M6.500 1.300L11.500 6.400V15.400H1.300V6.400Z" fill="#2b2b2b" stroke="#5e5e5e" stroke-width="1"/><path d="M3.100 10.500H9.900" stroke="#6e6e6e" stroke-width="1"/></svg><div class="red" style="left:17px;top:208px;width:1107px;height:252px"></div></div>
<div class="abs" style="left:460px;top:581px;width:1434px;height:30px;background:#313335"></div>
<div id="run" class="abs">
<span id="t32" class="t" style="left:8.00px;top:8px;--ls:0.350px"><i>运行</i>:</span>
<svg style="left:67px;top:8px" width="18" height="18" viewBox="0 0 18 18"><path d="M8.900.5C6.200.5 5.400 1.400 5.400 3v1.800h3.700v.7H3.300C1.600 5.500.5 6.800.5 9s1 3.500 2.700 3.500h1.500v-2.200c0-1.500 1.200-2.600 2.700-2.600h3.700c1.200 0 2.100-.9 2.100-2.100V3c0-1.500-1.400-2.500-4.300-2.500z" fill="#3f7a9e"/><circle cx="7" cy="2.600" r=".8" fill="#3c3f41"/><path d="M9.100 17.500c2.700 0 3.500-.9 3.500-2.500v-1.800H8.900v-.7h5.800c1.700 0 2.800-1.300 2.800-3.500s-1-3.500-2.700-3.500h-1.500v2.200c0 1.500-1.200 2.600-2.700 2.600H6.900c-1.200 0-2.100.9-2.100 2.100V15c0 1.500 1.400 2.500 4.300 2.500z" fill="#a68f22"/><circle cx="11" cy="15.400" r=".8" fill="#3c3f41"/></svg>
<span id="t33" class="t" style="left:90.00px;top:8px;--ls:0.500px"><i>表达式</i></span>
<svg style="left:144px;top:13px" width="10" height="10" viewBox="0 0 10 10"><path d="M.8.800L9.200 9.200M9.200.8L.8 9.200" stroke="#6e7173" stroke-width="1.100"/></svg>
<div class="abs" style="left:0;top:33px;width:1867px;height:1px;background:#323232"></div><div class="abs" style="left:51px;top:30px;width:117px;height:4px;border-radius:2px;background:#747a80"></div>
<svg style="left:1810px;top:9px" width="17" height="17" viewBox="0 0 17 17"><path d="M10.02 2.56L9.75 0.19L6.25 0.19L5.98 2.56L4.21 3.58L2.03 2.63L0.27 5.66L2.19 7.08L2.19 9.12L0.27 10.54L2.03 13.57L4.21 12.62L5.98 13.64L6.25 16.01L9.75 16.01L10.02 13.64L11.79 12.62L13.97 13.57L15.73 10.54L13.81 9.12L13.81 7.08L15.73 5.66L13.97 2.63L11.79 3.58Z" fill="#afb1b3"/><circle cx="8" cy="8.1" r="2.7" fill="#3c3f41"/></svg>
<div class="abs" style="left:1843px;top:16px;width:16px;height:2px;background:#afb1b3"></div>
<div class="abs" style="left:35px;top:34px;width:1px;height:321px;background:#323232"></div>
<svg style="left:13px;top:45px" width="13" height="15" viewBox="0 0 13 15"><path d="M0 0L12.500 7.500L0 15z" fill="#499c54"/></svg>
<svg style="left:9px;top:75px" width="18" height="18" viewBox="0 0 18 18"><path d="M17.300 3.300l-3 3-2.600-.6-.6-2.600 3-3C12 -.5 9.800 0 8.500 1.400 7.200 2.700 6.900 4.600 7.500 6.200L.6 13.800c-.7.800-.7 2 .1 2.800.8.800 2 .8 2.800.1l7.500-7c1.600.6 3.500.3 4.800-1 1.400-1.400 1.800-3.500 1.500-5.400z" fill="#afb1b3"/></svg>
<div class="abs" style="left:6px;top:104px;width:24px;height:1px;background:#555759"></div>
<div class="abs" style="left:12px;top:119px;width:12px;height:12px;background:#5c5c5c"></div>
<div class="abs" style="left:6px;top:145px;width:24px;height:1px;background:#555759"></div>
<svg style="left:11px;top:161px" width="15" height="12" viewBox="0 0 15 12"><rect x="0" y="0" width="7.500" height="5" fill="#afb1b3"/><rect x="9" y="0" width="6" height="5" fill="#afb1b3"/><rect x="0" y="7" width="15" height="5" fill="#afb1b3"/></svg>
<div class="abs" style="left:6px;top:187px;width:24px;height:1px;background:#555759"></div>
<svg style="left:8px;top:199px" width="19" height="18" viewBox="0 0 19 18"><path d="M12.500-.2L18.900 6.500L13.700 9.200L13.100 14.100L9.900 11.200L1.100 17.900L7.200 8.900L4 5.200L9 4.800Z" fill="#afb1b3"/></svg>
<svg style="left:50px;top:45px" width="9" height="16" viewBox="0 0 9 16"><path d="M4.500 15V1.500M.8 5.200L4.500 1.500L8.200 5.200" stroke="#5c6062" stroke-width="1.600" fill="none"/></svg>
<svg style="left:48px;top:77px" width="12" height="16" viewBox="0 0 12 16"><path d="M6 0V13.500M.8 8.500L6 13.800L11.200 8.500" stroke="#5c6062" stroke-width="1.600" fill="none"/></svg>
<svg style="left:46px;top:110px" width="17" height="18" viewBox="0 0 17 18"><path d="M0 1H16M0 6.500H12a3.300 3.300 0 0 1 0 6.600H8.500M0 12.500H5" stroke="#afb1b3" stroke-width="1.800" fill="none"/><path d="M11.500 9.500V16.500L7 13z" fill="#afb1b3"/></svg>
<div class="abs" style="left:40px;top:136px;width:28px;height:28px;border-radius:4px;background:#5a5d5f"></div>
<svg style="left:46px;top:141px" width="17" height="16" viewBox="0 0 17 16"><path d="M0 1H4.500M0 6H4.500M0 11H4.500M0 15H16M10.500 0V9" stroke="#afb1b3" stroke-width="1.800" fill="none"/><path d="M5.500 6.500H15.500L10.500 12z" fill="#afb1b3"/></svg>
<svg style="left:45px;top:175px" width="19" height="17" viewBox="0 0 19 17"><rect x="4" y="0" width="11" height="3" fill="#afb1b3"/><path d="M0 5H19V12H15.500V9.500H3.500V12H0z" fill="#afb1b3"/><rect x="5" y="11" width="9" height="5.500" fill="#afb1b3"/><rect x="15.500" y="6.300" width="1.800" height="1.500" fill="#3c3f41"/></svg>
<svg style="left:47px;top:206px" width="14" height="17" viewBox="0 0 14 17"><path d="M4.500 0H9.500L10 1.200H14V3.200H0V1.200H4z" fill="#afb1b3"/><path d="M1.500 4.500H12.500V15.500c0 .8-.6 1.500-1.500 1.500H3c-.9 0-1.500-.7-1.500-1.500z" fill="#afb1b3"/></svg>
<div id="console" class="abs">
<div class="ol" style="top:1.25px">D:\Python\A-Python<i>项目</i>\cs\Scripts\python.exe D:\Python\A-Python<i>项目</i>\Python<i>学习</i>\<i>表达式</i>.py</div>
<div class="ol" style="top:28.75px"><i>请输入一个数字（仅接收整数）：</i><span style="color:#0d8a1e;font-style:italic">22</span></div>
<div class="ol" style="top:56.25px"><i>你输入的数字为：</i>22</div>
<div class="ol" style="top:83.75px"><i>对数字执行左移</i>5<i>位运算符结果为：</i>705</div>
<div class="ol" style="top:111.25px"><i>在对移位后的数字执行按位取反运算结果为：</i>22</div>
<div class="ol" style="top:166.25px"><i>进程已结束</i>,<i>退出代码</i>0</div>
</div>
<div class="red" style="left:48px;top:49px;width:566px;height:147px"></div>
</div>
<div id="btools" class="abs">
<div class="abs" style="left:125px;top:0;width:70px;height:27px;background:#2d2f30"></div>
<svg style="left:42px;top:8px" width="12" height="15" viewBox="0 0 12 15"><path d="M3 2V13M9.100 4C9.100 8.200 3 6.800 3 10.500" stroke="#afb1b3" stroke-width="1.900" fill="none"/><circle cx="3" cy="2.200" r="2.200" fill="#afb1b3"/><circle cx="3" cy="12.900" r="2.200" fill="#afb1b3"/><circle cx="9.100" cy="3.700" r="2.200" fill="#afb1b3"/></svg>
<span id="t34" class="t" style="left:60.40px;--ls:0.233px"><i>版本控制</i></span>
<svg style="left:138px;top:9px" width="11" height="12" viewBox="0 0 11 12"><path d="M.5 0L10.500 6L.5 12z" fill="#afb1b3"/></svg>
<span id="t35" class="t" style="left:157.60px;color:#ffffff"><i>运行</i></span>
<svg style="left:210px;top:8px" width="16" height="15" viewBox="0 0 16 15"><path d="M8 0L16 3.800L8 7.600L0 3.800z" fill="#afb1b3"/><path d="M1.800 6.300L8 9.200L14.200 6.300L16 7.200L8 11L0 7.200z" fill="#afb1b3"/><path d="M1.800 9.800L8 12.700L14.200 9.800L16 10.700L8 14.500L0 10.700z" fill="#afb1b3"/></svg>
<span id="t36" class="t" style="left:230.80px;--ls:0.111px">Python <i>软件包</i></span>
<svg style="left:347px;top:9px" width="13" height="12" viewBox="0 0 13 12"><path d="M0 0H2.500V2.500H0zM4 0H13V2.500H4zM0 4.500H2.500V7H0zM4 4.500H13V7H4zM0 9H2.500V11.500H0zM4 9H13V11.500H4z" fill="#afb1b3"/></svg>
<span id="t37" class="t" style="left:366.50px;--sx:0.9450">TODO</span>
<svg style="left:432px;top:8px" width="15" height="15" viewBox="0 0 18 18"><path d="M8.900.5C6.200.5 5.400 1.400 5.400 3v1.800h3.700v.7H3.300C1.600 5.500.5 6.800.5 9s1 3.500 2.700 3.500h1.500v-2.200c0-1.500 1.200-2.600 2.700-2.600h3.700c1.200 0 2.100-.9 2.100-2.100V3c0-1.500-1.400-2.500-4.300-2.500z" fill="#afb1b3"/><circle cx="7" cy="2.600" r=".9" fill="#3c3f41"/><path d="M9.100 17.500c2.700 0 3.500-.9 3.500-2.500v-1.800H8.900v-.7h5.800c1.700 0 2.800-1.300 2.800-3.500s-1-3.500-2.700-3.500h-1.500v2.200c0 1.500-1.200 2.600-2.700 2.600H6.900c-1.200 0-2.100.9-2.100 2.100V15c0 1.500 1.400 2.500 4.300 2.500z" fill="#afb1b3"/><circle cx="11" cy="15.400" r=".9" fill="#3c3f41"/></svg>
<span id="t38" class="t" style="left:452.80px;--ls:0.222px">Python <i>控制台</i></span>
<svg style="left:566px;top:7px" width="14" height="14" viewBox="0 0 14 14"><circle cx="7" cy="7" r="6.800" fill="#afb1b3"/><rect x="6" y="3" width="2" height="5" fill="#3c3f41"/><rect x="6" y="9.300" width="2" height="2" fill="#3c3f41"/></svg>
<span id="t39" class="t" style="left:585.00px;--ls:0.900px"><i>问题</i></span>
<svg style="left:636px;top:8px" width="14" height="13" viewBox="0 0 14 13"><rect x="0" y="0" width="14" height="13" fill="#afb1b3"/><path d="M2.500 3L6 6L2.500 9" stroke="#3c3f41" stroke-width="1.400" fill="none"/><path d="M7 9.800H11.500" stroke="#3c3f41" stroke-width="1.400"/></svg>
<span id="t40" class="t" style="left:655.80px"><i>终端</i></span>
<svg style="left:705px;top:7px" width="16" height="15" viewBox="0 0 16 15"><path d="M4.200 0H11.800L16 7.500L11.800 15H4.200L0 7.500z" fill="#afb1b3"/><path d="M6 3.800L11.500 7.500L6 11.200z" fill="#3c3f41"/></svg>
<span id="t41" class="t" style="left:726.00px"><i>服务</i></span>
</div>
<div id="status" class="abs">
<svg style="left:7px;top:5px" width="16" height="16" viewBox="0 0 16 16"><path d="M4.500.8H15.200V11.500H4.500z" stroke="#afb1b3" stroke-width="1.500" fill="none"/><path d="M1 4V15H12" stroke="#afb1b3" stroke-width="1.500" fill="none"/></svg>
<span id="t42" class="t" style="left:33.60px"><i>移除冗余圆括号</i></span>
<span id="t43" class="t" style="left:1434.60px">207:21</span>
<span id="t44" class="t" style="left:1497.50px;--sx:0.8646">CRLF</span>
<span id="t45" class="t" style="left:1548.00px;--sx:0.9773">UTF-8</span>
<span id="t46" class="t" style="left:1606.00px">4 <i>个空格</i></span>
<span id="t47" class="t" style="left:1678.80px;--ls:0.104px">Python 3.11 (A-Python<i>项目</i>)</span>
<svg style="left:1890px;top:3px" width="15" height="16" viewBox="0 0 15 16"><path d="M1.500 7V4a2.800 2.800 0 0 1 5.600 0V5" stroke="#afb1b3" stroke-width="1.700" fill="none"/><rect x="5" y="7" width="10" height="8.500" fill="#afb1b3"/></svg>
</div>
<div id="desk" class="abs"><div class="abs" style="left:1087px;top:4px;width:46px;height:6px;border-radius:4px 4px 0 0;background:#47392a"></div></div>
</body>
</html>
